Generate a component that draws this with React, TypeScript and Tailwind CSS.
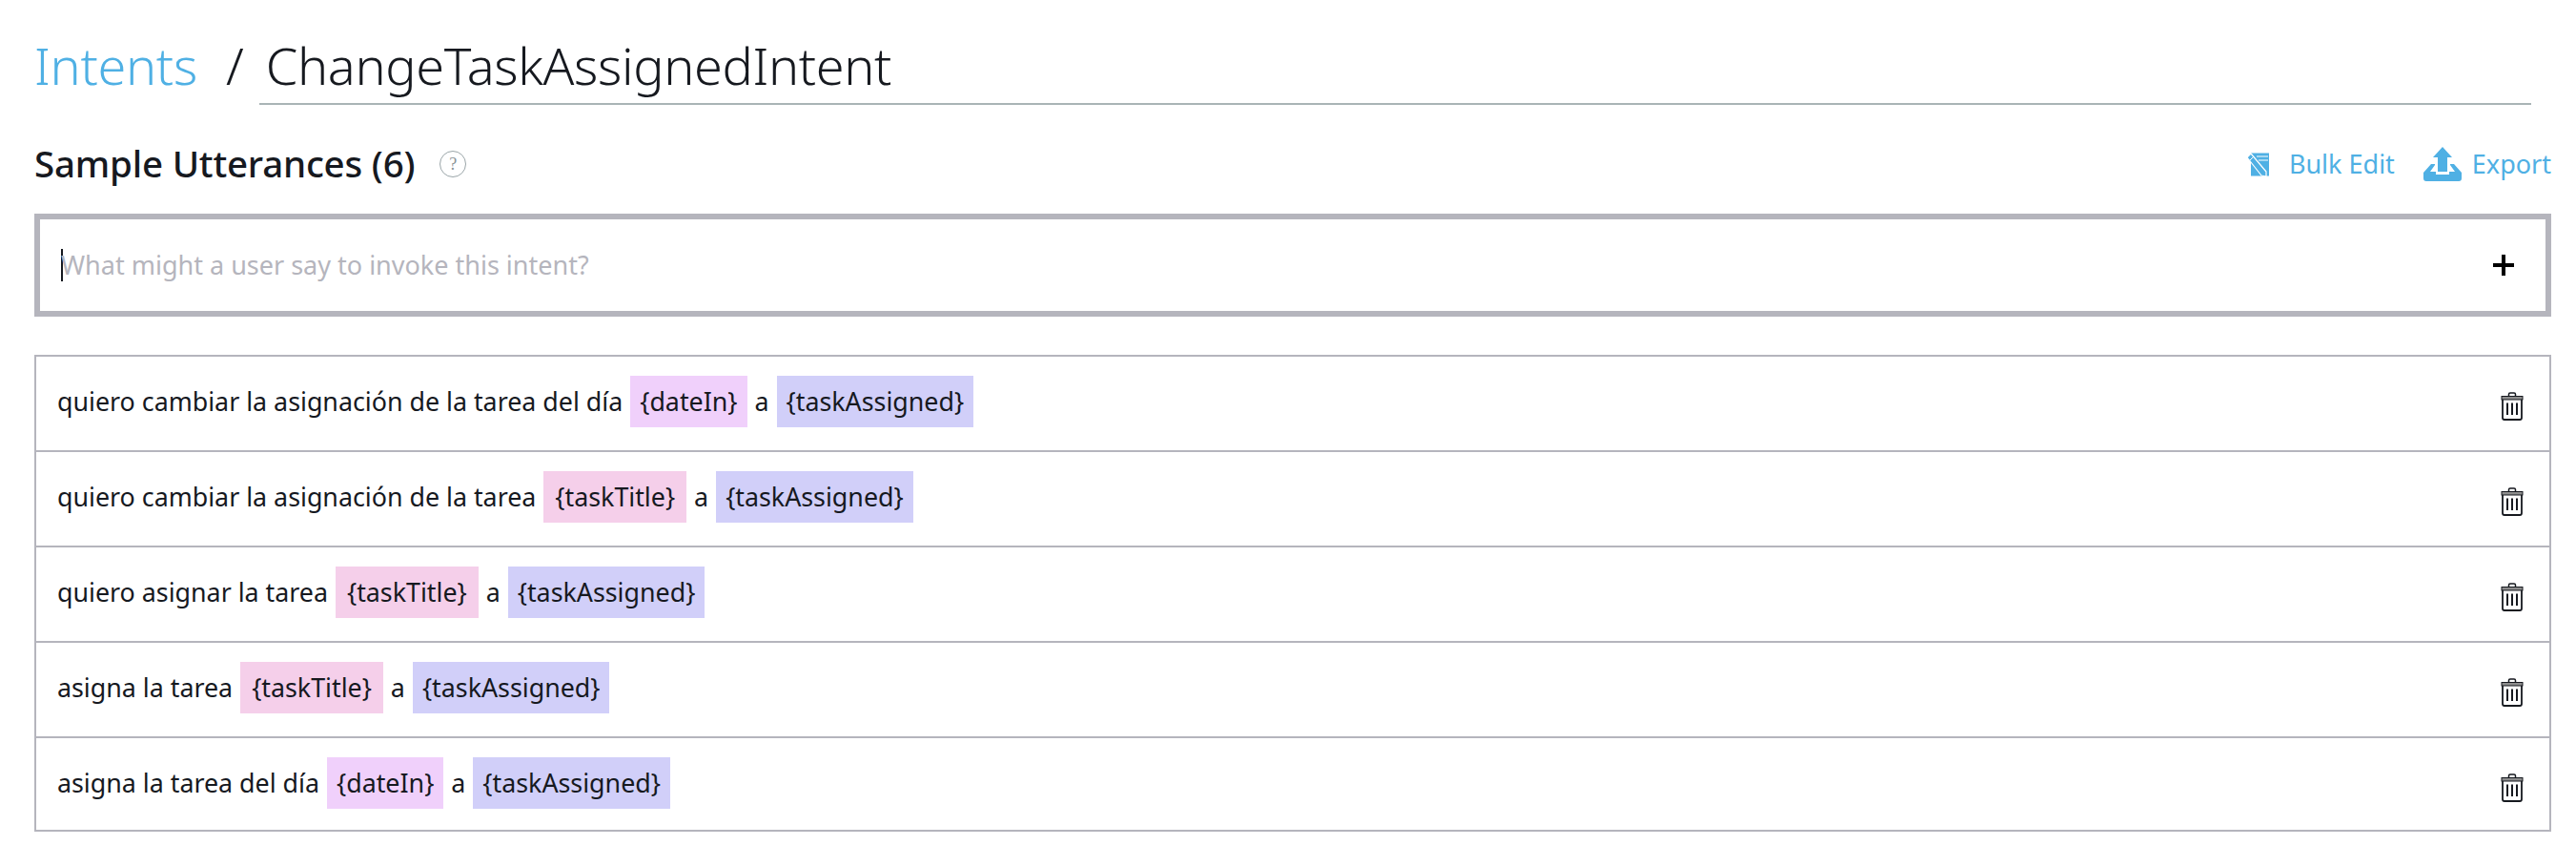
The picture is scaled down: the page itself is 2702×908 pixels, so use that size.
const font = "font-['Noto_Sans',sans-serif]";

type Part = { text: string; slot?: "date" | "title" | "assigned" };

const chipColors = {
  date: "bg-[#f0d0fb] px-[10px]",
  title: "bg-[#f5cfea] px-[12px]",
  assigned: "bg-[#d1cff9] px-[10px]",
};

const utterances: Part[][] = [
  [
    { text: "quiero cambiar la asignación de la tarea del día" },
    { text: "{dateIn}", slot: "date" },
    { text: "a" },
    { text: "{taskAssigned}", slot: "assigned" },
  ],
  [
    { text: "quiero cambiar la asignación de la tarea" },
    { text: "{taskTitle}", slot: "title" },
    { text: "a" },
    { text: "{taskAssigned}", slot: "assigned" },
  ],
  [
    { text: "quiero asignar la tarea" },
    { text: "{taskTitle}", slot: "title" },
    { text: "a" },
    { text: "{taskAssigned}", slot: "assigned" },
  ],
  [
    { text: "asigna la tarea" },
    { text: "{taskTitle}", slot: "title" },
    { text: "a" },
    { text: "{taskAssigned}", slot: "assigned" },
  ],
  [
    { text: "asigna la tarea del día" },
    { text: "{dateIn}", slot: "date" },
    { text: "a" },
    { text: "{taskAssigned}", slot: "assigned" },
  ],
];

function BulkEditIcon() {
  return (
    <svg width="25" height="25" viewBox="0 0 25 25" className="shrink-0">
      <rect x="5" y="0.5" width="19" height="24" fill="#4fb0e4" />
      <path d="M11 4h12M13 8h10" stroke="#fff" strokeWidth="1" />
      <path d="M1 5 L5 1 L21 20 L21 25 L16 24 Z" fill="#4fb0e4" stroke="#fff" strokeWidth="1.2" strokeLinejoin="round" />
      <path d="M4 8 L8 4" stroke="#fff" strokeWidth="1" />
    </svg>
  );
}

function ExportIcon() {
  return (
    <svg width="40" height="36" viewBox="0 0 40 36" className="shrink-0">
      <path d="M20 0 L30 11 L25 11 L25 26 L15 26 L15 11 L10 11 Z" fill="#4fb0e4" />
      <path d="M8 18 L12 18 L12 19 L7 26 L13 26 L13 29 L27 29 L27 26 L33 26 L28 19 L28 18 L32 18 L40 27 L40 33 Q40 36 37 36 L3 36 Q0 36 0 33 L0 27 Z" fill="#4fb0e4" />
    </svg>
  );
}

function TrashIcon() {
  return (
    <svg width="24" height="30" viewBox="0 0 24 30" fill="none" className="shrink-0" stroke="#16191f">
      <path d="M8.5 4V2.5Q8.5 1 10 1H14Q15.5 1 15.5 2.5V4" strokeWidth="1.5" />
      <rect x="1" y="4.5" width="22" height="3.5" fill="#8d8d8d" stroke="#16191f" strokeWidth="1" />
      <path d="M2 8V27Q2 29 4 29H20Q22 29 22 27V8" strokeWidth="1.8" />
      <path d="M7 11.5V24M12 11.5V24M17 11.5V24" strokeWidth="2" />
    </svg>
  );
}

function HelpIcon() {
  return (
    <span className="ml-[26px] flex h-[28px] w-[28px] items-center justify-center rounded-full border border-[#9aa5a8] font-['Liberation_Serif',serif] text-[18px] leading-none text-[#8a9497]">
      ?
    </span>
  );
}

export default function App() {
  return (
    <div className={`${font} min-h-[908px] w-[2702px] bg-white pl-[36px] pr-[26px] text-[#16191f]`}>
      <div className="flex h-[110px] items-end">
        <a className="pb-[6px] text-[54px] leading-[72px] font-light tracking-[-0.3px] text-[#4fb0e4]">Intents</a>
        <span className="ml-[30px] pb-[6px] text-[54px] leading-[72px] font-light">/</span>
        <div className="ml-[16px] mr-[21px] flex-1 border-b-2 border-[#a9b4b6] pb-[4px] pl-[7px] text-[54px] leading-[72px] font-light tracking-[-0.35px]">
          ChangeTaskAssignedIntent
        </div>
      </div>

      <div className="flex h-[114px] items-center justify-between pt-[10px]">
        <div className="flex items-center">
          <h2 className="-mt-[2px] text-[38.5px] leading-[48px] font-medium tracking-[-0.2px]">Sample Utterances (6)</h2>
          <HelpIcon />
        </div>
        <div className="flex items-center text-[27px] leading-[36px] text-[#4fb0e4]">
          <BulkEditIcon />
          <span className="ml-[20px]">Bulk Edit</span>
          <span className="ml-[30px]"><ExportIcon /></span>
          <span className="ml-[11px]">Export</span>
        </div>
      </div>

      <div className="flex h-[108px] items-center justify-between border-[6px] border-[#b5b5bd] pl-[22px] pr-[33px]">
        <div className="flex items-center">
          <span className="h-[34px] w-[2px] bg-[#16191f]" />
          <span className="-ml-[2px] text-[27px] leading-[34px] text-[#b5b5bd]">What might a user say to invoke this intent?</span>
        </div>
        <svg width="22" height="22" viewBox="0 0 22 22">
          <path d="M11 0V22M0 11H22" stroke="#000" strokeWidth="4" />
        </svg>
      </div>

      <div className="mt-[40px] border-x-2 border-t-2 border-[#b5b5bd]">
        {utterances.map((parts, i) => (
          <div
            key={i}
            className={`flex items-start justify-between border-b-2 border-[#b5b5bd] pl-[22px] pr-[27px] pt-[20px] ${i === 4 ? "h-[98px]" : "h-[100px]"}`}
          >
            <div className="flex items-center gap-[8px] text-[26.8px] leading-[54px]">
              {parts.map((part, j) =>
                part.slot ? (
                  <span key={j} className={`${chipColors[part.slot]} h-[54px]`}>{part.text}</span>
                ) : (
                  <span key={j}>{part.text}</span>
                ),
              )}
            </div>
            <span className="mt-[17px]"><TrashIcon /></span>
          </div>
        ))}
      </div>
    </div>
  );
}
